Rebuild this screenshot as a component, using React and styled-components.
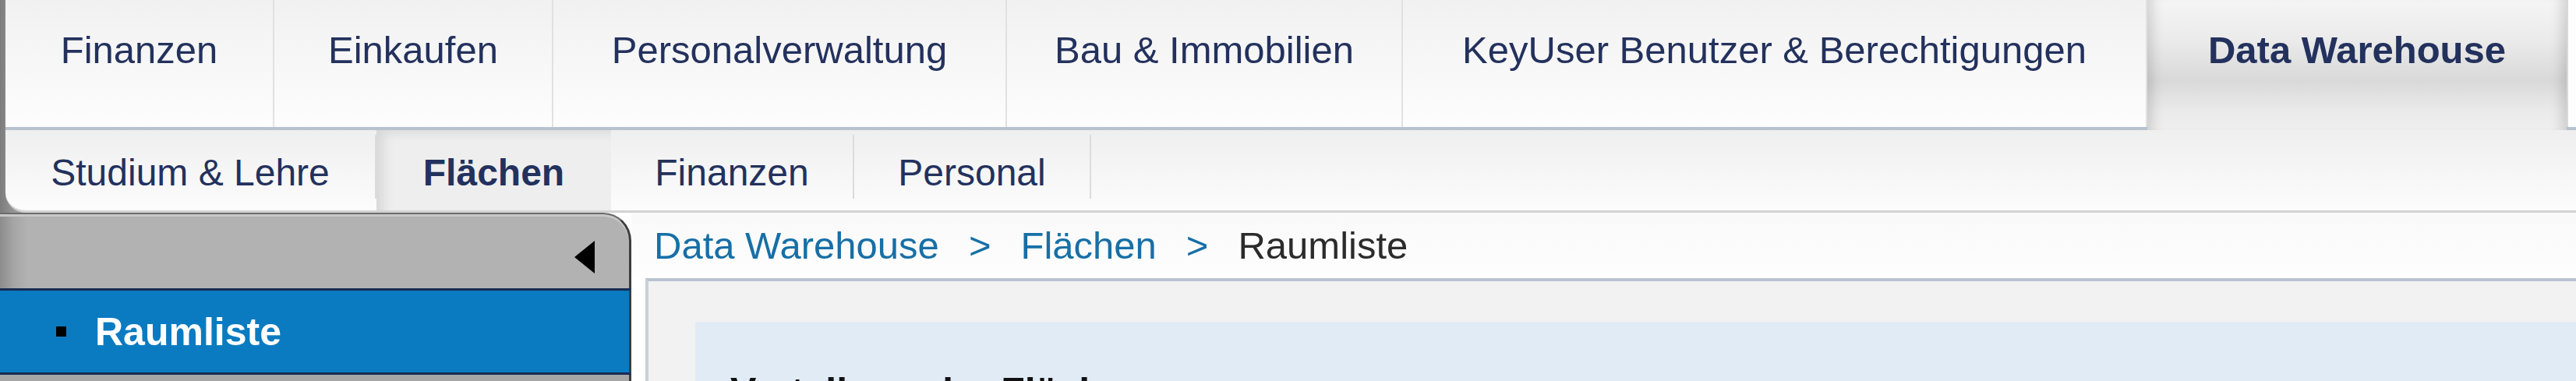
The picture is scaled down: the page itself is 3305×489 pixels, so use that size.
import React from 'react';
import styled, { createGlobalStyle } from 'styled-components';

const GlobalStyle = createGlobalStyle`
  html, body {
    margin: 0;
    padding: 0;
    background: #ffffff;
    overflow: hidden;
  }
`;

const Page = styled.div`
  width: 3305px;
  height: 489px;
  overflow: hidden;
  font-family: "Liberation Sans", Arial, sans-serif;
  background: #ffffff;
`;

/* dark frame strip on the left, visible through the rounded corner of the sub nav */
const TopArea = styled.div`
  padding-left: 7px;
  background: linear-gradient(90deg, #7c7c7c 0, #9a9a9a 20px, #b0b0b0 40px);
`;

const TabBar = styled.div`
  display: flex;
  height: 163px;
  background: linear-gradient(#f1f1f1, #fdfdfd);
  border-bottom: 4px solid #b7c2ce;
`;

const Tab = styled.div`
  box-sizing: border-box;
  width: ${({ $w }) => $w}px;
  flex: none;
  padding-top: 34px;
  text-align: center;
  font-size: 49px;
  line-height: 60px;
  color: #23315d;
  white-space: nowrap;
  border-right: 2px solid #e1e1e1;
`;

const ActiveTab = styled(Tab)`
  font-weight: bold;
  height: 167px;
  margin-bottom: -4px;
  position: relative;
  z-index: 1;
  border-right: none;
  background: linear-gradient(#f5f5f5 0%, #ebebeb 30%, #d9d9d9 62%, #eaeaea 85%, #efefef 100%);
  box-shadow: inset 18px 0 16px -12px rgba(0, 0, 0, 0.15),
    inset -18px 0 16px -12px rgba(0, 0, 0, 0.15);
`;

const TabRest = styled.div`
  flex: 1;
  background: #fdfdfd;
  border-left: 2px solid #d8d8d8;
`;

const SubNav = styled.div`
  display: flex;
  height: 103px;
  background: linear-gradient(#efefef, #fcfcfc);
  border-bottom: 3px solid #d3d3d3;
  border-bottom-left-radius: 26px;
`;

const SubItem = styled.div`
  box-sizing: border-box;
  width: ${({ $w }) => $w}px;
  flex: none;
  padding-top: 25px;
  text-align: center;
  font-size: 48px;
  line-height: 60px;
  color: #23315d;
  white-space: nowrap;
  font-weight: ${({ $active }) => ($active ? 'bold' : 'normal')};
  background: ${({ $active }) => ($active ? '#eeeeee' : 'transparent')};
  box-shadow: ${({ $active }) =>
    $active ? 'inset 16px 10px 16px -8px rgba(0, 0, 0, 0.1)' : 'none'};
`;

const SubDivider = styled.div`
  width: 2px;
  flex: none;
  margin: 6px 0 15px;
  background: #dcdcdc;
`;

const Body = styled.div`
  display: flex;
  height: 216px;
  overflow: hidden;
`;

const Sidebar = styled.div`
  width: 810px;
  flex: none;
  display: flex;
  flex-direction: column;
`;

const SideHeader = styled.div`
  box-sizing: border-box;
  height: 97px;
  flex: none;
  display: flex;
  justify-content: flex-end;
  align-items: center;
  padding: 14px 44px 0 0;
  background: linear-gradient(90deg, #8c8c8c 0, #a6a6a6 18px, #b2b2b2 36px);
  border-top: 2px solid #6c6c6c;
  border-right: 3px solid #3c3c3c;
  border-top-right-radius: 36px;
  box-shadow: inset 0 3px 0 #c8c8c8;
`;

const CollapseArrow = styled.div`
  width: 0;
  height: 0;
  border-top: 21px solid transparent;
  border-bottom: 21px solid transparent;
  border-right: 26px solid #000000;
`;

const SideItem = styled.div`
  height: 105px;
  flex: none;
  display: flex;
  align-items: center;
  gap: 37px;
  padding-left: 72px;
  background: #0a7bc1;
  border-top: 3px solid #182c50;
  border-bottom: 3px solid #182c50;
  border-right: 3px solid #3c3c3c;
  color: #ffffff;
  font-weight: bold;
  font-size: 50px;
`;

const Bullet = styled.span`
  width: 13px;
  height: 13px;
  background: #000000;
  flex: none;
`;

const SideRest = styled.div`
  flex: 1;
  background: #a6a6a6;
  border-right: 3px solid #3c3c3c;
`;

const Main = styled.div`
  flex: 1;
  min-width: 0;
  display: flex;
  flex-direction: column;
`;

const Breadcrumb = styled.div`
  box-sizing: border-box;
  height: 84px;
  flex: none;
  display: flex;
  align-items: center;
  gap: 38px;
  padding: 0 0 0 29px;
  background: linear-gradient(#f9f9f9, #fefefe);
  font-size: 49px;
  white-space: nowrap;
`;

const Crumb = styled.span`
  color: ${({ $current }) => ($current ? '#2b2b2b' : '#176fa6')};
`;

const ContentBox = styled.div`
  flex: 1;
  min-height: 0;
  overflow: hidden;
  margin-left: 18px;
  padding: 52px 0 0 60px;
  background: #f2f2f2;
  border-top: 4px solid #bac4d0;
  border-left: 4px solid #c9d0d9;
`;

const Panel = styled.div`
  height: 200px;
  padding: 60px 0 0 45px;
  background: #e1ebf5;
`;

const PanelTitle = styled.div`
  font-size: 50px;
  line-height: 60px;
  font-weight: bold;
  color: #111111;
`;

const mainTabs = [
  { label: 'Finanzen', w: 345 },
  { label: 'Einkaufen', w: 358 },
  { label: 'Personalverwaltung', w: 582 },
  { label: 'Bau & Immobilien', w: 508 },
  { label: 'KeyUser Benutzer & Berechtigungen', w: 955 },
];

const subTabs = [
  { label: 'Studium & Lehre', w: 474 },
  { label: 'Flächen', w: 301, active: true },
  { label: 'Finanzen', w: 310 },
  { label: 'Personal', w: 302 },
];

const App = () => {
  return (
    <Page>
      <GlobalStyle />
      <TopArea>
        <TabBar>
          {mainTabs.map((tab) => (
            <Tab key={tab.label} $w={tab.w}>
              {tab.label}
            </Tab>
          ))}
          <ActiveTab $w={538}>Data Warehouse</ActiveTab>
          <TabRest />
        </TabBar>
        <SubNav>
          {subTabs.map((item) => (
            <React.Fragment key={item.label}>
              <SubItem $w={item.w} $active={item.active}>
                {item.label}
              </SubItem>
              {!item.active && <SubDivider />}
            </React.Fragment>
          ))}
        </SubNav>
      </TopArea>
      <Body>
        <Sidebar>
          <SideHeader>
            <CollapseArrow />
          </SideHeader>
          <SideItem>
            <Bullet />
            Raumliste
          </SideItem>
          <SideRest />
        </Sidebar>
        <Main>
          <Breadcrumb>
            <Crumb>Data Warehouse</Crumb>
            <Crumb>&gt;</Crumb>
            <Crumb>Flächen</Crumb>
            <Crumb>&gt;</Crumb>
            <Crumb $current>Raumliste</Crumb>
          </Breadcrumb>
          <ContentBox>
            <Panel>
              <PanelTitle>Verteilung der Flächen</PanelTitle>
            </Panel>
          </ContentBox>
        </Main>
      </Body>
    </Page>
  );
};

export default App;
